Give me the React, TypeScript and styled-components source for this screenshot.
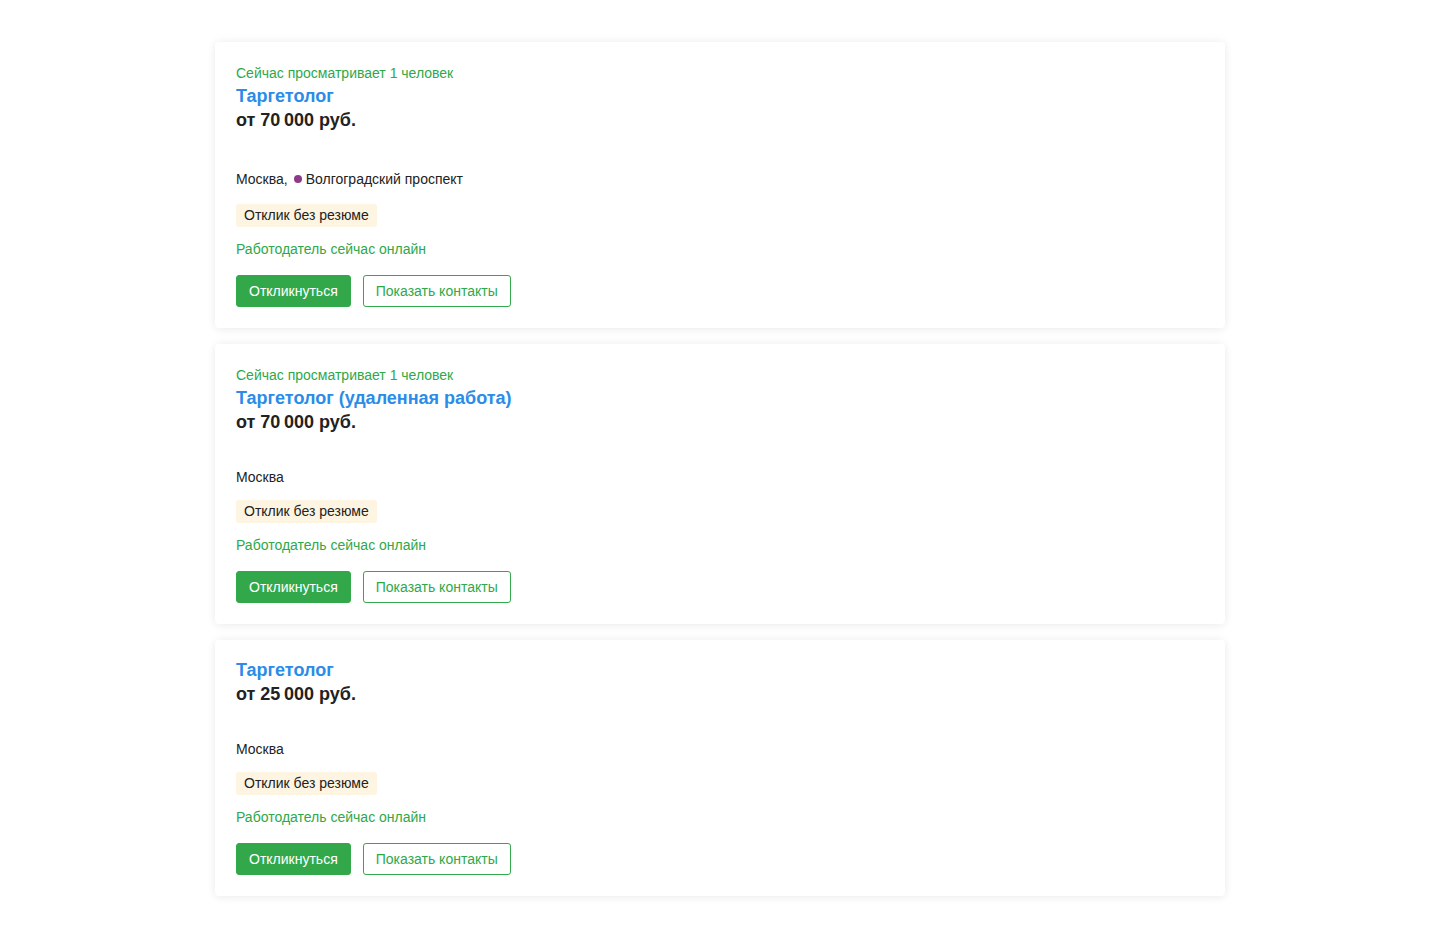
import React from "react";
import styled, { createGlobalStyle } from "styled-components";

const Global = createGlobalStyle`
  html, body { margin: 0; padding: 0; background: #fff; }
  body { font-family: "Liberation Sans", Arial, Helvetica, sans-serif; color: #222; }
`;

const Page = styled.div`
  width: 1010px;
  margin: 0 0 0 215px;
  padding: 42px 0 36px;
  display: flex;
  flex-direction: column;
  gap: 16px;
`;

const Card = styled.div`
  background: #fff;
  border-radius: 4px;
  box-shadow: 0 -2px 12px rgba(0, 0, 0, 0.035), 0 2px 8px rgba(0, 0, 0, 0.06);
  padding: 20px 21px 21px;
  display: flex;
  flex-direction: column;
`;

const Viewers = styled.div`
  font-size: 14px;
  line-height: 22px;
  color: #2ea84a;
`;

const Title = styled.a<{ $first?: boolean }>`
  font-size: 18px;
  line-height: 24px;
  font-weight: 700;
  color: #2b8ce8;
  text-decoration: none;
  margin-top: ${(p) => (p.$first ? "-2px" : "0")};
`;

const Salary = styled.div`
  font-size: 18px;
  line-height: 24px;
  font-weight: 700;
  color: #222;
  margin-bottom: 34px;
`;

const Location = styled.div<{ $metro?: boolean }>`
  font-size: 14px;
  line-height: ${(p) => (p.$metro ? "24px" : "18px")};
  margin-top: ${(p) => (p.$metro ? "1px" : "0")};
  margin-bottom: ${(p) => (p.$metro ? "-1px" : "0")};
  color: #222;
  display: flex;
  align-items: center;
`;

const MetroDot = styled.span`
  display: inline-block;
  width: 8px;
  height: 8px;
  border-radius: 50%;
  background: #8e3a8c;
  margin: 0 4px 0 6px;
`;

const Tag = styled.div`
  align-self: flex-start;
  margin-top: 14px;
  background: #fdf5e1;
  border-radius: 3px;
  padding: 0 8px;
  font-size: 14px;
  line-height: 23px;
  color: #222;
`;

const Online = styled.div`
  margin-top: 12px;
  font-size: 14px;
  line-height: 20px;
  color: #2ea84a;
`;

const Actions = styled.div`
  margin-top: 16px;
  display: flex;
  gap: 12px;
`;

const Button = styled.button<{ $outline?: boolean }>`
  height: 32px;
  box-sizing: border-box;
  padding: 0 12px;
  border-radius: 3px;
  font-family: inherit;
  font-size: 14px;
  cursor: pointer;
  border: 1px solid #33a84b;
  background: ${(p) => (p.$outline ? "#fff" : "#33a84b")};
  color: ${(p) => (p.$outline ? "#2ea84a" : "#fff")};
`;

type Vacancy = {
  viewers?: boolean;
  title: string;
  salary: string;
  city: string;
  metro?: string;
};

const data: Vacancy[] = [
  { viewers: true, title: "Таргетолог", salary: "от 70\u2009000 руб.", city: "Москва", metro: "Волгоградский проспект" },
  { viewers: true, title: "Таргетолог (удаленная работа)", salary: "от 70\u2009000 руб.", city: "Москва" },
  { title: "Таргетолог", salary: "от 25\u2009000 руб.", city: "Москва" },
];

export default function App() {
  return (
    <>
      <Global />
      <Page>
        {data.map((v, i) => (
          <Card key={i}>
            {v.viewers && <Viewers>Сейчас просматривает 1 человек</Viewers>}
            <Title href="#" $first={!v.viewers}>{v.title}</Title>
            <Salary>{v.salary}</Salary>
            <Location $metro={!!v.metro}>
              {v.metro ? (
                <>
                  {v.city},<MetroDot />
                  {v.metro}
                </>
              ) : (
                v.city
              )}
            </Location>
            <Tag>Отклик без резюме</Tag>
            <Online>Работодатель сейчас онлайн</Online>
            <Actions>
              <Button>Откликнуться</Button>
              <Button $outline>Показать контакты</Button>
            </Actions>
          </Card>
        ))}
      </Page>
    </>
  );
}
